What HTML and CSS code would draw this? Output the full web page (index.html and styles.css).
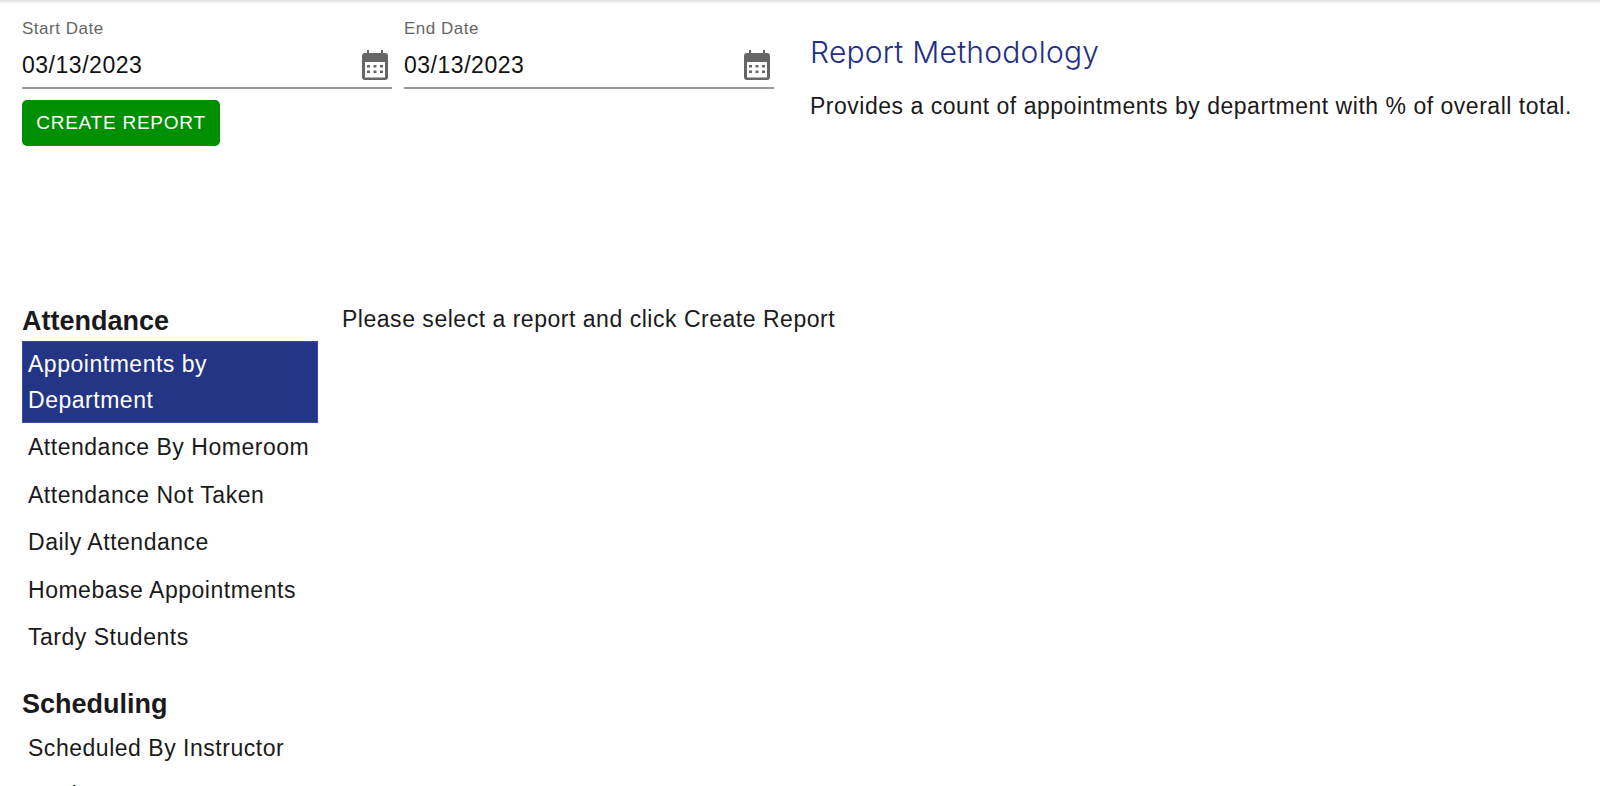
FILE: index.html
```html
<!DOCTYPE html>
<html lang="en">
<head>
<meta charset="utf-8">
<title>Reports</title>
<link rel="stylesheet" href="styles.css">
</head>
<body>
<div class="topshadow"></div>
<section class="top">
  <div class="controls">
    <div class="dates">
      <div class="field">
        <label class="field-label">Start Date</label>
        <div class="field-input">
          <span>03/13/2023</span>
          <svg class="cal" viewBox="0 0 26 30"><path fill="#666" fill-rule="evenodd" d="M5 0h2v3h12V0h2v3h2a3 3 0 0 1 3 3v21a3 3 0 0 1-3 3H3a3 3 0 0 1-3-3V6a3 3 0 0 1 3-3h2zM3 12v15a.5.5 0 0 0 .5.5h19a.5.5 0 0 0 .5-.5V12zM5 15h3v2.500H5zm6.500 0h3v2.500h-3zM18 15h3v2.500h-3zM5 20.500h3V23H5zm6.500 0h3V23h-3zm6.500 0h3V23h-3z"/></svg>
        </div>
      </div>
      <div class="field">
        <label class="field-label">End Date</label>
        <div class="field-input">
          <span>03/13/2023</span>
          <svg class="cal" viewBox="0 0 26 30"><path fill="#666" fill-rule="evenodd" d="M5 0h2v3h12V0h2v3h2a3 3 0 0 1 3 3v21a3 3 0 0 1-3 3H3a3 3 0 0 1-3-3V6a3 3 0 0 1 3-3h2zM3 12v15a.5.5 0 0 0 .5.5h19a.5.5 0 0 0 .5-.5V12zM5 15h3v2.500H5zm6.500 0h3v2.500h-3zM18 15h3v2.500h-3zM5 20.500h3V23H5zm6.500 0h3V23h-3zm6.500 0h3V23h-3z"/></svg>
        </div>
      </div>
    </div>
    <button class="create">CREATE REPORT</button>
  </div>
  <div class="method">
    <h2>Report Methodology</h2>
    <p>Provides a count of appointments by department with % of overall total.</p>
  </div>
</section>
<section class="main">
  <nav class="side">
    <h3>Attendance</h3>
    <ul>
      <li class="active">Appointments by Department</li>
      <li>Attendance By Homeroom</li>
      <li>Attendance Not Taken</li>
      <li>Daily Attendance</li>
      <li>Homebase Appointments</li>
      <li>Tardy Students</li>
    </ul>
    <h3 class="second">Scheduling</h3>
    <ul>
      <li>Scheduled By Instructor</li>
      <li>Students per Course</li>
    </ul>
  </nav>
  <div class="content">Please select a report and click Create Report</div>
</section>
</body>
</html>
```
FILE: styles.css
```css
html, body {
  margin: 0;
  height: 786px;
  overflow: hidden;
  background: #fff;
}
body {
  font-family: "Liberation Sans", Arial, sans-serif;
  color: #1a1a1a;
  letter-spacing: 0.52px;
}
.topshadow {
  height: 4px;
  background: linear-gradient(#dedede, #fff);
}
.top {
  display: flex;
  padding: 16px 22px 0;
  height: 275px;
  box-sizing: border-box;
}
.controls {
  width: 752px;
  flex: none;
}
.dates {
  display: flex;
  gap: 12px;
}
.field {
  width: 370px;
}
.field-label {
  display: block;
  font-size: 17px;
  line-height: 18px;
  color: #666;
}
.field-input {
  display: flex;
  align-items: center;
  justify-content: space-between;
  box-sizing: content-box;
  height: 44px;
  padding: 5px 4px 0 0;
  border-bottom: 2px solid #999;
  font-size: 23px;
  color: #111;
}
.cal {
  width: 26px;
  height: 30px;
}
.create {
  display: block;
  margin-top: 11px;
  width: 198px;
  height: 46px;
  background: #008f00;
  color: #fff;
  border: 0;
  border-radius: 5px;
  font: 19px "Liberation Sans", Arial, sans-serif;
  letter-spacing: 0.75px;
  padding: 0;
}
.method {
  margin-left: 36px;
}
.method h2 {
  margin: 14px 0 0;
  font-family: Inter, "Liberation Sans", sans-serif;
  font-size: 30px;
  line-height: 36px;
  font-weight: 300;
  color: #1f2f86;
  letter-spacing: 0.25px;
}
.method p {
  margin: 21px 0 0;
  font-size: 23px;
  line-height: 30px;
  white-space: nowrap;
}
.main {
  display: flex;
  padding: 0 22px;
}
.side {
  width: 296px;
  flex: none;
}
.side h3 {
  margin: 22px 0 0;
  font-size: 27px;
  line-height: 40px;
  font-weight: 700;
  letter-spacing: 0;
}
.side h3.second {
  margin-top: 22px;
  line-height: 41px;
}
.side ul {
  list-style: none;
  margin: 0;
  padding: 0;
}
.side li {
  font-size: 23px;
  line-height: 35.5px;
  padding: 6px;
  box-sizing: border-box;
  height: 47.5px;
}
.side li.active {
  height: 82px;
  margin-bottom: 1px;
  padding: 5px;
  background: #253585;
  border: 1px solid #3a4ba3;
  color: #fff;
}
.content {
  margin-left: 24px;
  padding-top: 25px;
  font-size: 23px;
  line-height: 30px;
}
```
